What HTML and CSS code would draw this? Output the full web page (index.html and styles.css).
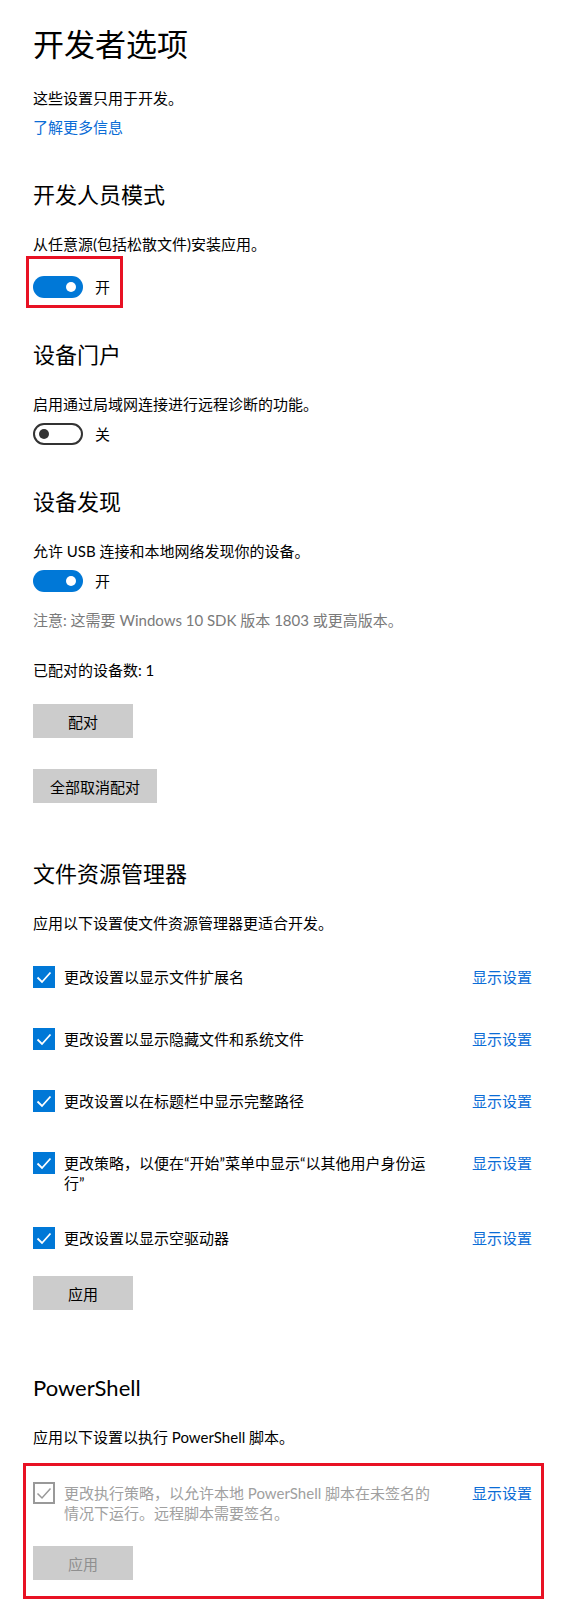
FILE: index.html
```html
<!DOCTYPE html>
<html lang="zh-CN">
<head>
  <meta charset="UTF-8" />
  <meta name="viewport" content="width=device-width, initial-scale=1.0" />
  <title>开发者选项</title>
  <link rel="stylesheet" href="styles.css">
</head>
<body>
  <main class="page">
    <h1 class="title">开发者选项</h1>
    <p class="text intro">这些设置只用于开发。</p>
    <a class="link more" href="#">了解更多信息</a>

    <!-- 开发人员模式 -->
    <h2 class="heading">开发人员模式</h2>
    <p class="text desc">从任意源(包括松散文件)安装应用。</p>
    <div class="mark">
      <div class="toggle-row">
        <span class="toggle on"></span>
        <span class="toggle-label">开</span>
      </div>
    </div>

    <!-- 设备门户 -->
    <h2 class="heading">设备门户</h2>
    <p class="text desc">启用通过局域网连接进行远程诊断的功能。</p>
    <div class="toggle-row">
      <span class="toggle off"></span>
      <span class="toggle-label">关</span>
    </div>

    <!-- 设备发现 -->
    <h2 class="heading">设备发现</h2>
    <p class="text desc">允许 USB 连接和本地网络发现你的设备。</p>
    <div class="toggle-row">
      <span class="toggle on"></span>
      <span class="toggle-label">开</span>
    </div>
    <p class="text note">注意: 这需要 Windows 10 SDK 版本 1803 或更高版本。</p>
    <p class="text paired">已配对的设备数: 1</p>
    <button class="btn first">配对</button>
    <button class="btn second">全部取消配对</button>

    <!-- 文件资源管理器 -->
    <h2 class="heading wide">文件资源管理器</h2>
    <p class="text desc">应用以下设置使文件资源管理器更适合开发。</p>
    <div class="checks">
      <div class="check">
        <span class="box"><svg viewBox="0 0 22 22"><polyline points="4.5,11.5 9,16 17.5,6.5" /></svg></span>
        <span class="check-text">更改设置以显示文件扩展名</span>
        <a class="link check-link" href="#">显示设置</a>
      </div>
      <div class="check">
        <span class="box"><svg viewBox="0 0 22 22"><polyline points="4.5,11.5 9,16 17.5,6.5" /></svg></span>
        <span class="check-text">更改设置以显示隐藏文件和系统文件</span>
        <a class="link check-link" href="#">显示设置</a>
      </div>
      <div class="check">
        <span class="box"><svg viewBox="0 0 22 22"><polyline points="4.5,11.5 9,16 17.5,6.5" /></svg></span>
        <span class="check-text">更改设置以在标题栏中显示完整路径</span>
        <a class="link check-link" href="#">显示设置</a>
      </div>
      <div class="check">
        <span class="box"><svg viewBox="0 0 22 22"><polyline points="4.5,11.5 9,16 17.5,6.5" /></svg></span>
        <span class="check-text">更改策略，以便在“开始”菜单中显示“以其他用户身份运行”</span>
        <a class="link check-link" href="#">显示设置</a>
      </div>
      <div class="check">
        <span class="box"><svg viewBox="0 0 22 22"><polyline points="4.5,11.5 9,16 17.5,6.5" /></svg></span>
        <span class="check-text">更改设置以显示空驱动器</span>
        <a class="link check-link" href="#">显示设置</a>
      </div>
    </div>
    <button class="btn apply">应用</button>

    <!-- PowerShell -->
    <h2 class="heading wide ps">PowerShell</h2>
    <p class="text desc">应用以下设置以执行 PowerShell 脚本。</p>
    <div class="ps-box">
      <div class="check disabled">
        <span class="box"><svg viewBox="0 0 22 22"><polyline points="4.5,11.5 9,16 17.5,6.5" /></svg></span>
        <span class="check-text">更改执行策略，以允许本地 PowerShell 脚本在未签名的情况下运行。远程脚本需要签名。</span>
        <a class="link check-link" href="#">显示设置</a>
      </div>
      <button class="btn apply" disabled>应用</button>
    </div>
  </main>
</body>
</html>
```

FILE: styles.css
```css
body {
  margin: 0;
  background-color: #ffffff;
  font-family: 'Lato', 'Noto Sans CJK SC', sans-serif;
  color: #000000;
}

.page {
  padding: 24px 39px 0 33px;
}

.title {
  margin: 0;
  font-size: 31px;
  line-height: 40px;
  font-weight: 400;
}

.heading {
  margin: 42px 0 0;
  font-size: 22px;
  line-height: 30px;
  font-weight: 400;
}

.heading.wide {
  margin-top: 56px;
}

.heading.ps {
  margin-top: 63px;
}

.text {
  margin: 0;
  font-size: 15px;
  line-height: 22px;
}

.intro {
  margin-top: 23px;
}

.desc {
  margin-top: 23px;
}

.link {
  color: #0a6cd6;
  text-decoration: none;
  font-size: 15px;
}

.more {
  display: block;
  margin-top: 7px;
  line-height: 22px;
}

.note {
  margin-top: 17px;
  color: #7a7a7a;
}

.paired {
  margin-top: 28px;
}

/* 开关 */
.toggle-row {
  display: flex;
  align-items: center;
  gap: 12px;
  height: 22px;
  margin-top: 8px;
}

.toggle {
  position: relative;
  width: 50px;
  height: 22px;
  border-radius: 11px;
  box-sizing: border-box;
  flex: none;
}

.toggle::after {
  content: '';
  position: absolute;
  top: 50%;
  width: 10px;
  height: 10px;
  margin-top: -5px;
  border-radius: 50%;
}

.toggle.on {
  background-color: #0078d7;
}

.toggle.on::after {
  right: 7px;
  background-color: #ffffff;
}

.toggle.off {
  border: 2px solid #333333;
}

.toggle.off::after {
  left: 4px;
  background-color: #333333;
}

.toggle-label {
  font-size: 15px;
  line-height: 22px;
}

/* 红框标注 */
.mark {
  display: flex;
  width: fit-content;
  margin: 1px 0 -10px -7px;
  padding: 17px 10px 7px 4px;
  border: 3px solid #e81123;
}

.mark .toggle-row {
  margin-top: 0;
}

/* 按钮 */
.btn {
  display: block;
  min-width: 100px;
  height: 34px;
  padding: 0 17px;
  border: none;
  background-color: #cccccc;
  color: #000000;
  font-family: inherit;
  font-size: 15px;
}

.btn.first {
  margin-top: 23px;
}

.btn.second {
  margin-top: 31px;
}

.btn.apply {
  margin-top: 22px;
}

.ps-box .btn.apply {
  margin-top: 24px;
}

.btn:disabled {
  color: #8f8f8f;
}

/* 复选框 */
.checks {
  display: flex;
  flex-direction: column;
  gap: 30px;
  margin-top: 27px;
}

.check {
  display: flex;
  align-items: flex-start;
  min-height: 32px;
}

.box {
  width: 22px;
  height: 22px;
  margin-top: 5px;
  flex: none;
  box-sizing: border-box;
  background-color: #0078d7;
}

.box svg {
  display: block;
  width: 22px;
  height: 22px;
  fill: none;
  stroke: #ffffff;
  stroke-width: 1.8;
}

.check-text {
  width: 368px;
  margin: 0 0 -1px 9px;
  padding-top: 6px;
  font-size: 15px;
  line-height: 20px;
}

.check-link {
  margin-left: auto;
  padding-top: 6px;
  line-height: 20px;
}

.check.disabled .box {
  background-color: transparent;
  border: 2px solid #999999;
}

.check.disabled .box svg {
  margin: -2px;
  stroke: #999999;
  stroke-width: 1.5;
}

.check.disabled .check-text {
  color: #a0a0a0;
}

.ps-box {
  margin: 15px -12px 0 -10.5px;
  padding: 11px 9px 16px 7.5px;
  border: 3px solid #e81123;
}
```
